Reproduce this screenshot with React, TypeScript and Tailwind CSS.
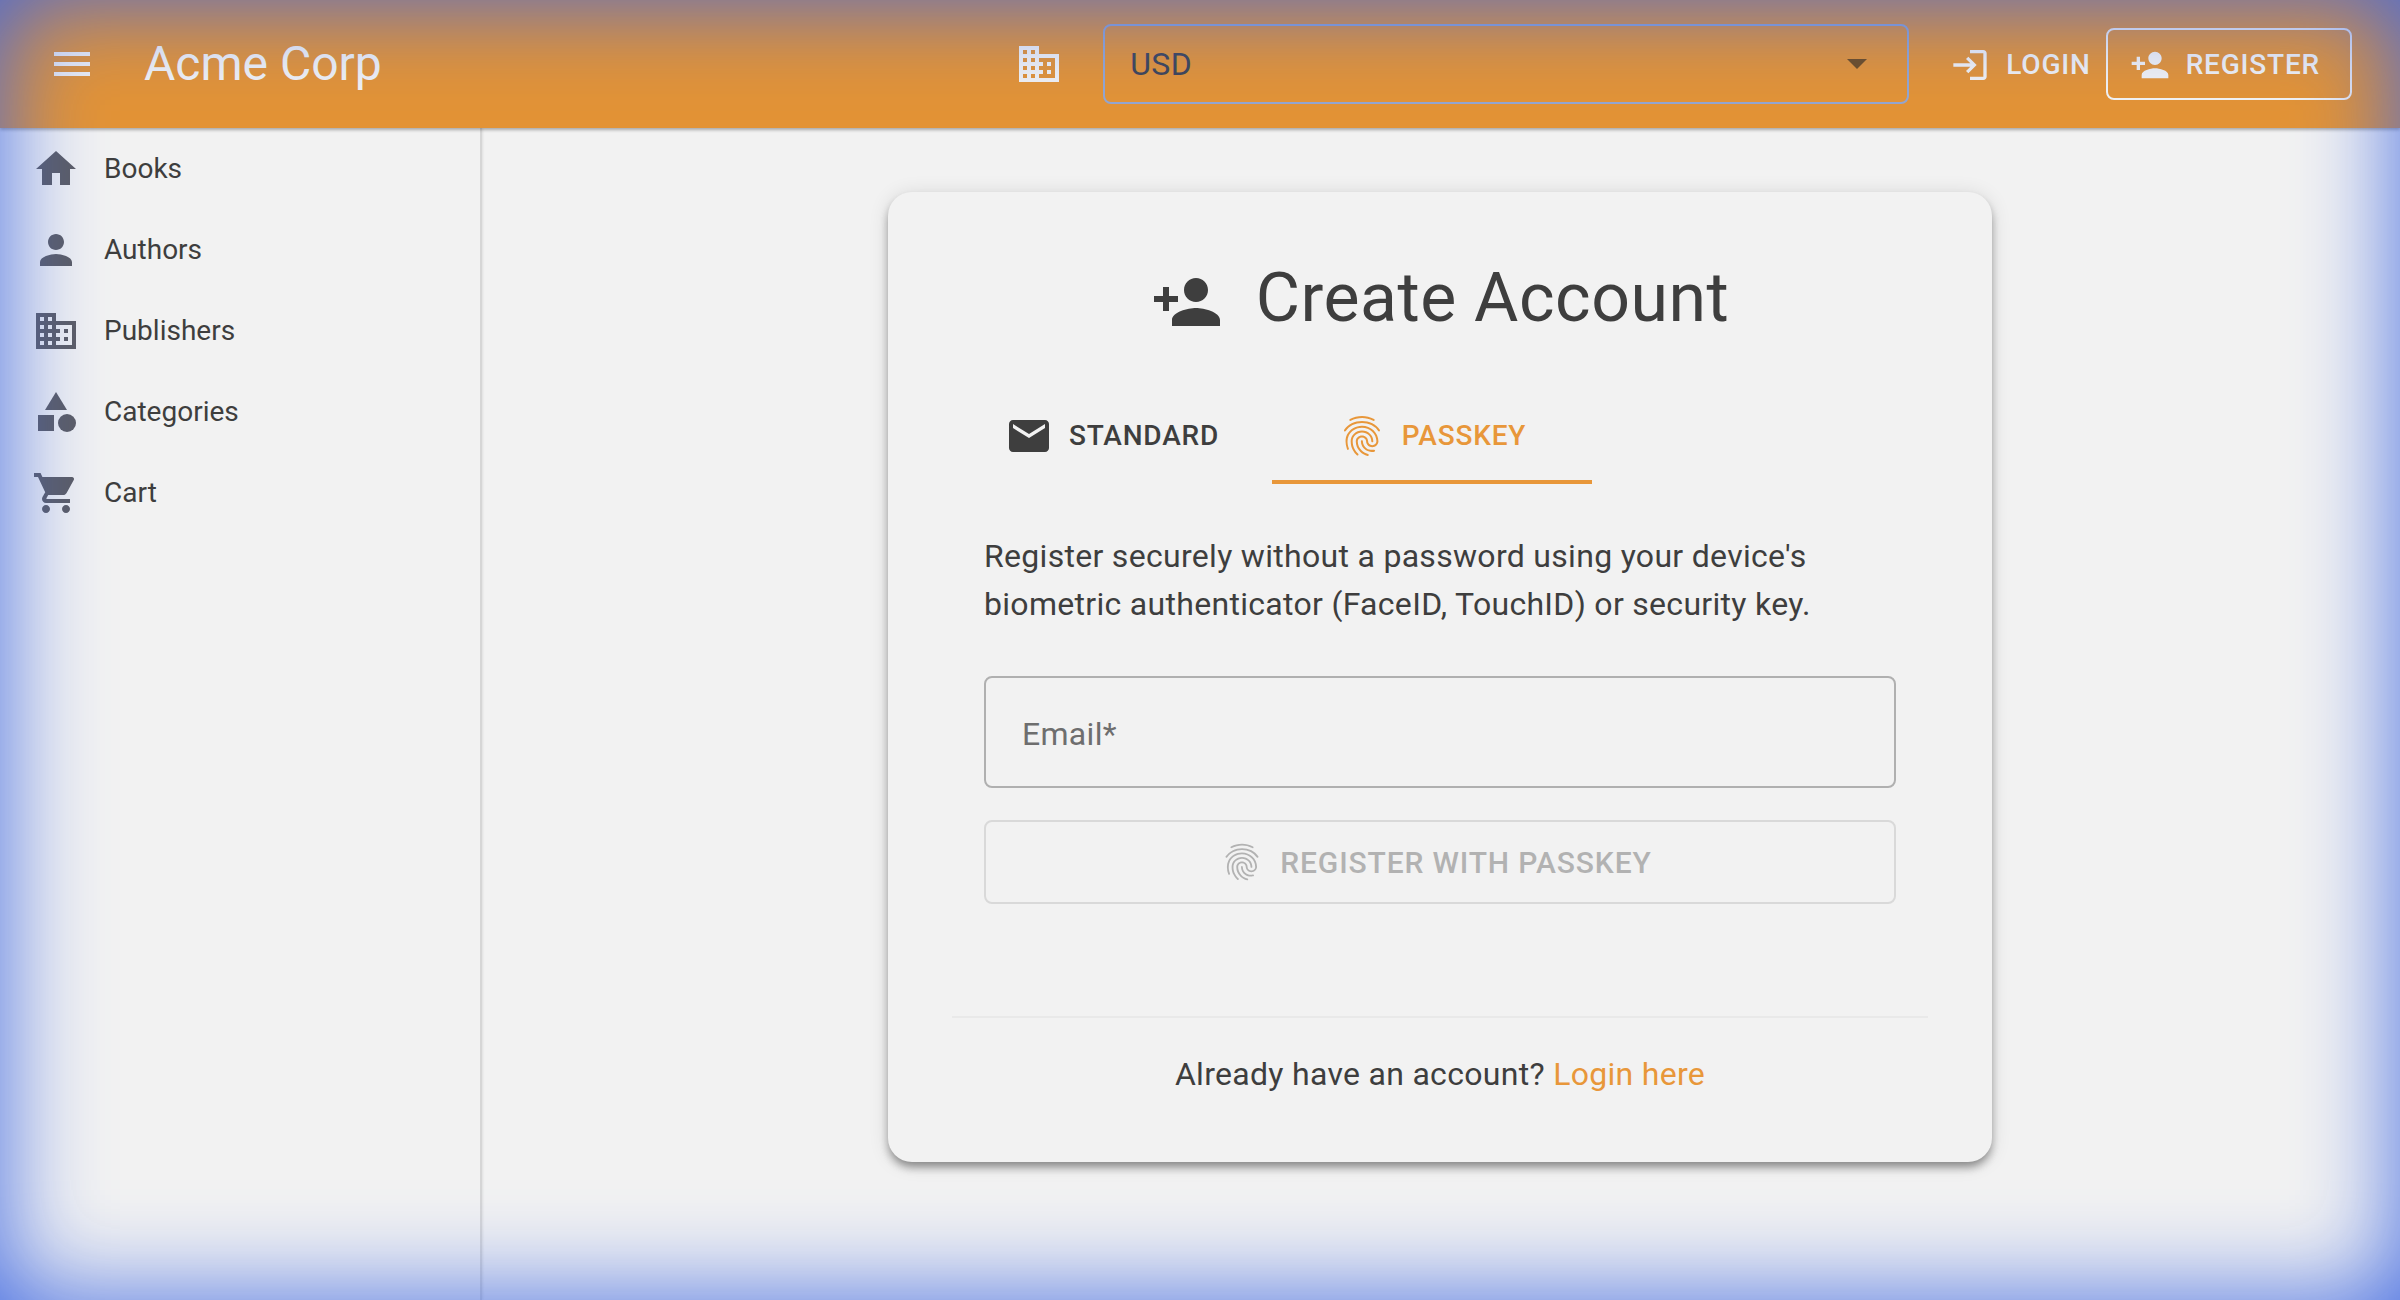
import { MdBusiness, MdCategory, MdEmail, MdFingerprint, MdHome, MdLogin, MdMenu, MdPerson, MdPersonAdd, MdShoppingCart } from 'react-icons/md';

const navItems = [
  { label: 'Books', icon: MdHome },
  { label: 'Authors', icon: MdPerson },
  { label: 'Publishers', icon: MdBusiness },
  { label: 'Categories', icon: MdCategory },
  { label: 'Cart', icon: MdShoppingCart },
];

const Header = () => (
  <header className="relative z-10 flex h-[128px] shrink-0 items-center bg-[#e39335] px-[48px] text-[#f2f2f2] shadow-[0_2px_3px_rgba(0,0,0,0.3)]">
    <MdMenu className="h-[48px] w-[48px] shrink-0" />
    <h1 className="ml-[48px] text-[48px] leading-[64px] font-normal">Acme Corp</h1>
    <MdBusiness className="ml-auto h-[48px] w-[48px] shrink-0" />
    <div className="ml-[40px] flex h-[80px] w-[806px] items-center justify-between rounded-[8px] border-2 border-[#93a6d0] pr-[40px] pl-[25px] text-[32px] tracking-[0.00938em] text-[#3e4454]">
      <span>USD</span>
      <span className="h-0 w-0 border-x-[10px] border-t-[10px] border-x-transparent border-t-[#6e4c1f]" />
    </div>
    <button className="ml-[41px] flex h-[72px] items-center pt-[2px] pr-[15px] text-[28px] font-medium tracking-[0.02857em]">
      <MdLogin className="mr-[16px] h-[40px] w-[40px]" />
      LOGIN
    </button>
    <button className="flex h-[72px] items-center rounded-[8px] border-2 border-[#f2f2f2] pt-[2px] pr-[30px] pl-[22px] text-[28px] font-medium tracking-[0.02857em]">
      <MdPersonAdd className="mr-[16px] h-[40px] w-[40px]" />
      REGISTER
    </button>
  </header>
);

const Sidebar = () => (
  <nav className="w-[482px] shrink-0 border-r-2 border-[#d6d6d6] shadow-[1px_0_2px_rgba(0,0,0,0.08)]">
    {navItems.map((item) => (
      <div key={item.label} className="flex h-[81px] items-center pl-[32px]">
        <item.icon className="h-[48px] w-[48px] shrink-0 text-[#5c5c62]" />
        <span className="ml-[24px] text-[28px] text-[#3e3e3e]">{item.label}</span>
      </div>
    ))}
  </nav>
);

const Card = () => (
  <div className="mt-[64px] h-[970px] w-[1104px] rounded-[24px] bg-[#f2f2f2] p-[64px] shadow-[0_6px_8px_-2px_rgba(0,0,0,0.3),0_6px_10px_0_rgba(0,0,0,0.14),0_2px_20px_0_rgba(0,0,0,0.12)]">
    <div className="flex h-[84px] items-center justify-center text-[#3e3e3e]">
      <MdPersonAdd className="mt-[8px] mr-[33px] h-[72px] w-[72px]" />
      <h2 className="text-[68px] leading-[84px] font-normal tracking-[0.00735em]">Create Account</h2>
    </div>

    <div className="mt-[48px] flex h-[96px] text-[28px] font-medium tracking-[0.02857em]">
      <div className="flex w-[320px] items-center justify-center text-[#3e3e3e]">
        <MdEmail className="mr-[16px] h-[48px] w-[48px]" />
        STANDARD
      </div>
      <div className="flex w-[320px] items-center justify-center border-b-4 border-[#e8973a] pt-[4px] text-[#e8973a]">
        <MdFingerprint className="mr-[16px] h-[48px] w-[48px]" />
        PASSKEY
      </div>
    </div>

    <div className="px-[32px] pt-[48px]">
      <p className="text-[32px] leading-[48px] tracking-[0.00938em] text-[#3e3e3e]">
        Register securely without a password using your device's
        <br />
        biometric authenticator (FaceID, TouchID) or security key.
      </p>
      <input
        placeholder="Email*"
        className="mt-[48px] block h-[112px] w-full rounded-[8px] border-2 border-[#b0b0b0] bg-transparent px-[36px] pt-[3px] text-[32px] tracking-[0.00938em] text-[#3e3e3e] outline-none placeholder:text-[#6e6e6e]"
      />
      <button
        disabled
        className="mt-[32px] flex h-[84px] w-full items-center justify-center rounded-[8px] border-2 border-[#d9d9d9] pr-[8px] text-[30px] font-medium tracking-[0.02857em] text-[#b2b2b2]"
      >
        <MdFingerprint className="mr-[16px] h-[44px] w-[44px]" />
        REGISTER WITH PASSKEY
      </button>
    </div>

    <div className="mt-[112px] border-t-2 border-[#e9e9e9] pt-[32px] text-center text-[32px] leading-[48px] tracking-[0.00938em] text-[#3e3e3e]">
      Already have an account? <span className="text-[#e8973a]">Login here</span>
    </div>
  </div>
);

export default function App() {
  return (
    <div className="relative flex h-screen flex-col overflow-hidden bg-[#f2f2f2] font-[Roboto,sans-serif]">
      <Header />
      <div className="flex min-h-0 flex-1">
        <Sidebar />
        <main className="flex flex-1 justify-center pr-[2px]">
          <Card />
        </main>
      </div>
      {/* blue edge glow sits over everything */}
      <div className="pointer-events-none fixed inset-0 z-20 shadow-[inset_0_0_100px_rgb(65,105,225)]" />
    </div>
  );
}
